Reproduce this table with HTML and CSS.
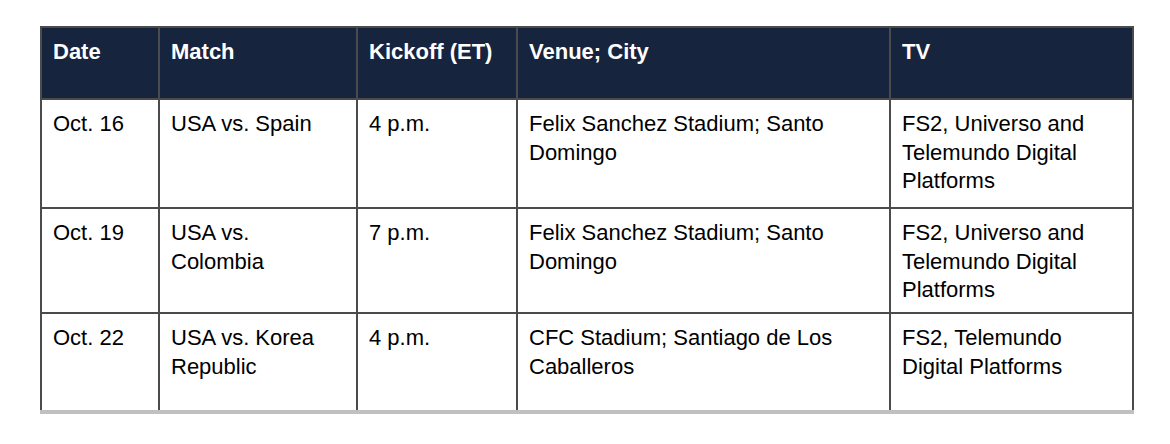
FILE: index.html
```html
<!DOCTYPE html>
<html lang="en">
<head>
<meta charset="utf-8">
<title>USA Schedule</title>
<link rel="stylesheet" href="styles.css">
</head>
<body>
<div class="wrap">
  <table class="schedule">
    <colgroup>
      <col class="c-date">
      <col class="c-match">
      <col class="c-kick">
      <col class="c-venue">
      <col class="c-tv">
    </colgroup>
    <thead>
      <tr class="head">
        <th>Date</th>
        <th>Match</th>
        <th>Kickoff (ET)</th>
        <th>Venue; City</th>
        <th>TV</th>
      </tr>
    </thead>
    <tbody>
      <tr class="r1">
        <td>Oct. 16</td>
        <td>USA vs. Spain</td>
        <td>4 p.m.</td>
        <td>Felix Sanchez Stadium; Santo Domingo</td>
        <td>FS2, Universo and Telemundo Digital Platforms</td>
      </tr>
      <tr class="r2">
        <td>Oct. 19</td>
        <td>USA vs. Colombia</td>
        <td>7 p.m.</td>
        <td>Felix Sanchez Stadium; Santo Domingo</td>
        <td>FS2, Universo and Telemundo Digital Platforms</td>
      </tr>
      <tr class="r3">
        <td>Oct. 22</td>
        <td>USA vs. Korea Republic</td>
        <td>4 p.m.</td>
        <td>CFC Stadium; Santiago de Los Caballeros</td>
        <td>FS2, Telemundo Digital Platforms</td>
      </tr>
    </tbody>
  </table>
</div>
</body>
</html>
```
FILE: styles.css
```css
html, body {
  margin: 0;
  padding: 0;
  background: #ffffff;
}

body {
  padding: 26px 0 0 40px;
  font-family: "Liberation Sans", Arial, Helvetica, sans-serif;
  font-size: 22px;
  line-height: 28.5px;
  color: #000000;
}

.wrap {
  width: 1094px;
  border-bottom: 4px solid #c0c0c0;
  overflow: hidden;
}

.schedule {
  width: 1094px;
  table-layout: fixed;
  border-collapse: separate;
  border-spacing: 0;
  border-top: 2px solid #4b4b4b;
  border-left: 2px solid #4b4b4b;
}

.c-date { width: 118px; }
.c-match { width: 198px; }
.c-kick { width: 160px; }
.c-venue { width: 373px; }
.c-tv { width: 243px; }

.schedule th,
.schedule td {
  box-sizing: border-box;
  padding: 10px 12px 0 11px;
  text-align: left;
  vertical-align: top;
  border-right: 2px solid #4b4b4b;
  border-bottom: 2px solid #4b4b4b;
}

.schedule th {
  background: #17243e;
  color: #ffffff;
  font-weight: bold;
}

.head { height: 72px; }
.r1 { height: 109px; }
.r2 { height: 105px; }
.r3 { height: 96px; }
.r3 td { border-bottom: none; }
```
